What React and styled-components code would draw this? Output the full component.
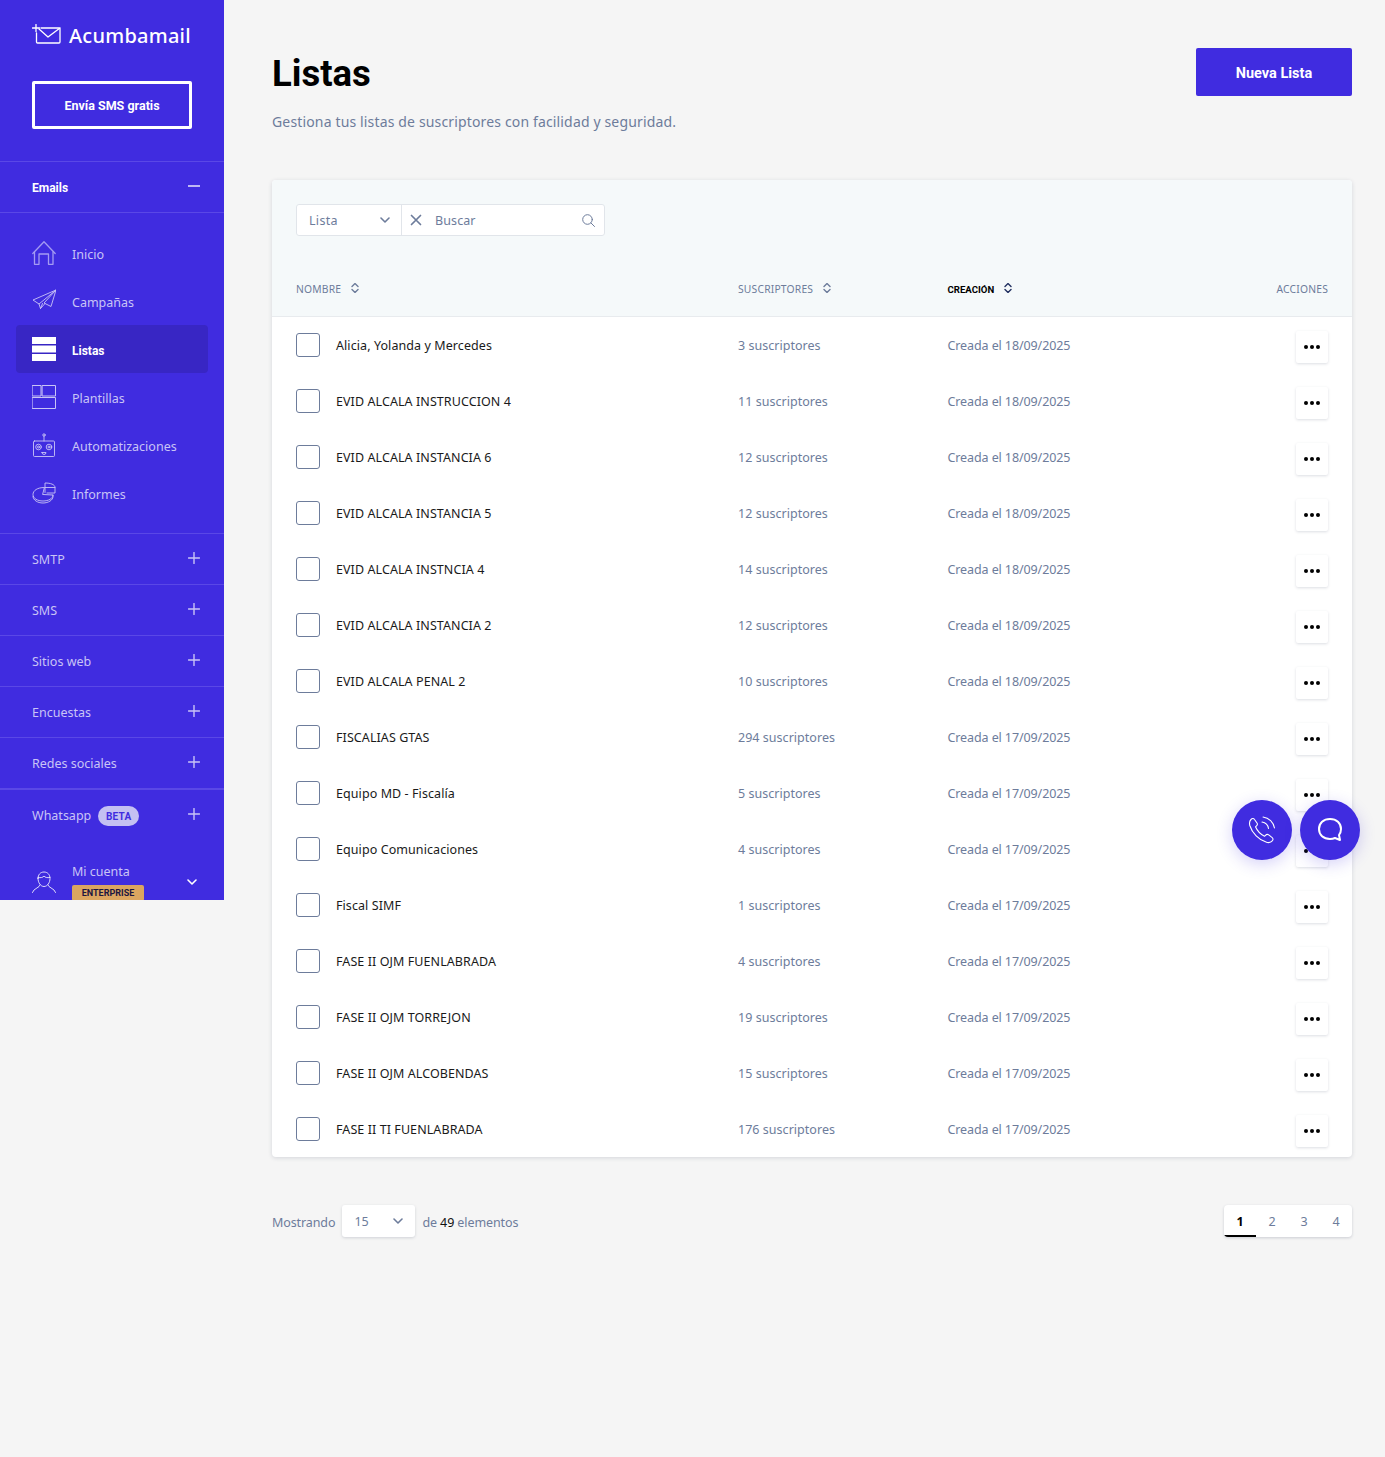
import React from "react";
import styled, { createGlobalStyle } from "styled-components";

const PRIMARY = "#402ce0";
const MUTED = "#6d7c9b";
const LAVENDER = "#c9c4f6";
const FONT = `"Noto Sans", "Liberation Sans", sans-serif`;
const BOLD_FONT = `Roboto, "Liberation Sans", sans-serif`;

const rows = [
	["Alicia, Yolanda y Mercedes", "3", "18/09/2025"],
	["EVID ALCALA INSTRUCCION 4", "11", "18/09/2025"],
	["EVID ALCALA INSTANCIA 6", "12", "18/09/2025"],
	["EVID ALCALA INSTANCIA 5", "12", "18/09/2025"],
	["EVID ALCALA INSTNCIA 4", "14", "18/09/2025"],
	["EVID ALCALA INSTANCIA 2", "12", "18/09/2025"],
	["EVID ALCALA PENAL 2", "10", "18/09/2025"],
	["FISCALIAS GTAS", "294", "17/09/2025"],
	["Equipo MD - Fiscalía", "5", "17/09/2025"],
	["Equipo Comunicaciones", "4", "17/09/2025"],
	["Fiscal SIMF", "1", "17/09/2025"],
	["FASE II OJM FUENLABRADA", "4", "17/09/2025"],
	["FASE II OJM TORREJON", "19", "17/09/2025"],
	["FASE II OJM ALCOBENDAS", "15", "17/09/2025"],
	["FASE II TI FUENLABRADA", "176", "17/09/2025"]
];

const GlobalStyle = createGlobalStyle`
	html, body {
		margin: 0;
		padding: 0;
		background: #f5f5f5;
	}
	body {
		font-family: ${FONT};
		font-size: 13px;
	}
	* {
		box-sizing: border-box;
	}
`;

const Page = styled.div`
	position: relative;
	display: flex;
	align-items: flex-start;
	width: 1385px;
	height: 1457px;
	overflow: hidden;
`;

/* sidebar */
const Sidebar = styled.aside`
	flex: none;
	width: 224px;
	height: 900px;
	overflow: hidden;
	background: ${PRIMARY};
	color: ${LAVENDER};
`;

const Logo = styled.div`
	display: flex;
	align-items: center;
	gap: 8px;
	height: 32px;
	margin: 20px 0 0 32px;
	color: #fff;
	font-size: 20px;
	font-weight: 500;
	letter-spacing: 0.25px;
`;

const LogoText = styled.span`
	margin-top: -2px;
`;

const SmsButton = styled.div`
	display: flex;
	align-items: center;
	justify-content: center;
	width: 160px;
	height: 48px;
	margin: 29px 0 32px 32px;
	border: 3px solid #fff;
	border-radius: 2px;
	color: #fff;
	font-family: ${BOLD_FONT};
	font-size: 12.5px;
	font-weight: 700;
`;

const Section = styled.div`
	display: flex;
	align-items: center;
	justify-content: space-between;
	height: ${(p) => p.$height || 51}px;
	padding: ${(p) => (p.$open ? 2 : 0)}px 24px 0 32px;
	border-top: ${(p) => (p.$thick ? 2 : 1)}px solid #5a48e6;
	font-size: ${(p) => (p.$open ? 12 : 12.5)}px;
	color: ${(p) => (p.$open ? "#fff" : LAVENDER)};
	font-weight: ${(p) => (p.$open ? 700 : 400)};
	font-family: ${(p) => (p.$open ? BOLD_FONT : FONT)};
`;

const SectionLabel = styled.span`
	display: flex;
	align-items: center;
	gap: 7px;
`;

const Beta = styled.span`
	display: inline-flex;
	align-items: center;
	justify-content: center;
	width: 41px;
	height: 20px;
	margin-top: 2px;
	border-radius: 10px;
	background: #c4c0f2;
	color: ${PRIMARY};
	font-family: ${BOLD_FONT};
	font-size: 10px;
	font-weight: 700;
	letter-spacing: 0.3px;
`;

const Nav = styled.nav`
	display: flex;
	flex-direction: column;
	padding: 16px 16px 16px;
	border-top: 1px solid #5a48e6;
`;

const NavItem = styled.div`
	display: flex;
	align-items: center;
	gap: 16px;
	height: 48px;
	padding-left: 16px;
	border-radius: 4px;
	background: ${(p) => (p.$active ? "#3826c4" : "transparent")};
	color: ${(p) => (p.$active ? "#fff" : LAVENDER)};
	font-family: ${(p) => (p.$active ? BOLD_FONT : FONT)};
	font-weight: ${(p) => (p.$active ? 700 : 400)};
	font-size: ${(p) => (p.$active ? 12 : 12.5)}px;
`;

const NavLabel = styled.span`
	padding-top: 3px;
`;

const Account = styled.div`
	display: flex;
	align-items: flex-start;
	gap: 16px;
	padding: 24px 27px 0 32px;
`;

const AccountIcon = styled.div`
	margin-top: 7px;
`;

const AccountText = styled.div`
	flex: 1;
	font-size: 12.5px;
	line-height: 18px;
	margin-top: -1px;
`;

const Plan = styled.div`
	display: flex;
	align-items: center;
	justify-content: center;
	width: 72px;
	height: 16px;
	margin-top: 4px;
	border-radius: 2px;
	background: #dba560;
	color: #1c1640;
	font-family: ${BOLD_FONT};
	font-size: 9px;
	font-weight: 700;
`;

/* main area */
const Main = styled.main`
	flex: 1;
	padding: 48px 33px 0 48px;
`;

const Head = styled.header`
	display: flex;
	align-items: flex-start;
	justify-content: space-between;
	height: 132px;
`;

const Title = styled.h1`
	margin: 1px 0 0;
	color: #000;
	font-family: ${BOLD_FONT};
	font-size: 36.5px;
	line-height: 50px;
	font-weight: 700;
`;

const Subtitle = styled.p`
	margin: 11px 0 0;
	color: ${MUTED};
	font-size: 14px;
	line-height: 24px;
	letter-spacing: 0.15px;
`;

const PrimaryButton = styled.div`
	display: flex;
	align-items: center;
	justify-content: center;
	width: 156px;
	height: 48px;
	padding-top: 2px;
	border-radius: 2px;
	background: ${PRIMARY};
	color: #fff;
	font-family: ${BOLD_FONT};
	font-size: 14.5px;
	font-weight: 700;
`;

const Card = styled.section`
	border-radius: 4px;
	background: #fff;
	box-shadow: 0 1px 4px rgba(40, 50, 80, 0.16);
	overflow: hidden;
`;

const CardTop = styled.div`
	height: 137px;
	padding: 24px 24px 0;
	border-bottom: 1px solid #e8ebee;
	background: #f5f9fa;
`;

const Filter = styled.div`
	display: flex;
	width: 309px;
	height: 32px;
	border: 1px solid #e1e5ea;
	border-radius: 3px;
	background: #fff;
	color: ${MUTED};
	font-size: 12.5px;
	letter-spacing: 0.1px;
`;

const FilterSelect = styled.div`
	display: flex;
	align-items: center;
	justify-content: space-between;
	width: 105px;
	padding: 0 11px 0 12px;
	border-right: 1px solid #e1e5ea;
	letter-spacing: 0.3px;
`;

const FilterSearch = styled.div`
	flex: 1;
	display: flex;
	align-items: center;
	gap: 13px;
	padding: 0 9px 0 8px;
`;

const SearchText = styled.span`
	flex: 1;
`;

const Columns = "442px 209.5px 1fr 90px";

const HeaderRow = styled.div`
	display: grid;
	grid-template-columns: ${Columns};
	align-items: center;
	height: 24px;
	margin-top: 41px;
`;

const HeaderCell = styled.div`
	display: flex;
	align-items: center;
	gap: 10px;
	color: ${(p) => (p.$active ? "#000" : MUTED)};
	font-family: ${(p) => (p.$active ? BOLD_FONT : FONT)};
	font-weight: ${(p) => (p.$active ? 700 : 400)};
	font-size: ${(p) => (p.$active ? 9.6 : 10.3)}px;
	letter-spacing: ${(p) => (p.$active ? 0 : 0.2)}px;
	justify-content: ${(p) => (p.$right ? "flex-end" : "flex-start")};
`;

const Row = styled.div`
	display: grid;
	grid-template-columns: ${Columns};
	align-items: center;
	height: 56px;
	padding: 0 24px;
`;

const NameCell = styled.div`
	display: flex;
	align-items: center;
	gap: 16px;
	color: #1a1a1a;
	font-size: 12.5px;
	letter-spacing: 0.08px;
`;

const Check = styled.span`
	width: 24px;
	height: 24px;
	border: 1px solid #6d7c9b;
	border-radius: 3px;
	background: #fff;
`;

const MutedCell = styled.div`
	color: ${MUTED};
	font-size: 12.5px;
	letter-spacing: ${(p) => p.$spacing}px;
`;

const ActionCell = styled.div`
	display: flex;
	justify-content: flex-end;
`;

const DotsButton = styled.div`
	display: flex;
	align-items: center;
	justify-content: center;
	gap: 2px;
	width: 32px;
	height: 32px;
	margin-top: 4px;
	border-radius: 2px;
	background: #fff;
	box-shadow: 0 1px 3px rgba(40, 50, 80, 0.16);
`;

const Dot = styled.i`
	width: 4px;
	height: 4px;
	border-radius: 50%;
	background: #000;
`;

const Footer = styled.div`
	display: flex;
	align-items: center;
	justify-content: space-between;
	margin-top: 48px;
`;

const Showing = styled.div`
	display: flex;
	align-items: center;
	gap: 7px;
	color: ${MUTED};
	font-size: 12.5px;
	letter-spacing: -0.1px;
`;

const ShowingText = styled.span`
	padding-top: 2px;
`;

const Strong = styled.span`
	color: #111;
`;

const PageSize = styled.div`
	display: flex;
	align-items: center;
	justify-content: space-between;
	width: 73px;
	height: 32px;
	padding: 0 12px;
	border-radius: 3px;
	background: #fff;
	box-shadow: 0 1px 3px rgba(40, 50, 80, 0.18);
`;

const Pager = styled.div`
	display: flex;
	border-radius: 4px;
	background: #fff;
	box-shadow: 0 1px 3px rgba(40, 50, 80, 0.2);
	overflow: hidden;
`;

const PageLink = styled.div`
	display: flex;
	align-items: center;
	justify-content: center;
	width: 32px;
	height: 32px;
	padding-top: 2px;
	border-bottom: 2px solid ${(p) => (p.$active ? "#000" : "transparent")};
	color: ${(p) => (p.$active ? "#000" : MUTED)};
	font-weight: ${(p) => (p.$active ? 700 : 400)};
	font-size: 12.5px;
`;

const FloatButton = styled.div`
	position: absolute;
	top: 800px;
	left: ${(p) => p.$left}px;
	display: flex;
	align-items: center;
	justify-content: center;
	width: 60px;
	height: 60px;
	border-radius: 50%;
	background: ${PRIMARY};
	box-shadow: 0 4px 16px rgba(64, 44, 224, 0.22);
`;

/* icons */
const Line = ({ size = 24, w, h, color = "currentColor", sw = 1, fill = "none", children, raised }) => (
	<svg
		width={w || size}
		height={h || size}
		viewBox={`0 0 ${w || size} ${h || size}`}
		fill={fill}
		stroke={color}
		strokeWidth={sw}
		strokeLinecap="round"
		strokeLinejoin="round"
		style={{ flex: "none", display: "block", marginTop: raised ? -2 : 0 }}
	>
		{children}
	</svg>
);

const LogoIcon = () => (
	<Line w={29} h={24} color="#fff" sw={1.3}>
		<path d="M4.500 9v9a1 1 0 0 0 1 1h21.500a1 1 0 0 0 1-1V5a1 1 0 0 0-1-1H9" />
		<path d="M7 5l9 8 12-9" />
		<path d="M4 .5v7M.5 4h7" />
	</Line>
);

const HomeIcon = () => (
	<Line color="#a49bf2" sw={1.3}>
		<path d="M.8 12.500L12 .8l11.200 11.700" />
		<path d="M2.500 11v12.300h4.500V13h9.500v10.300h4.500V11" />
	</Line>
);

const PlaneIcon = () => (
	<Line color={LAVENDER} sw={0.9}>
		<path d="M24 1L1 11l6 4L24 1z" />
		<path d="M24 1L12 14l7 3.500L24 1z" />
		<path d="M7 15l1.500 4.500L13 14.500" />
		<path d="M8.500 19.500l2-5" />
	</Line>
);

const ListIcon = () => (
	<svg width="24" height="24" viewBox="0 0 24 24" fill="#fff" style={{ flex: "none" }}>
		<rect y="0" width="24" height="7" />
		<rect y="8.500" width="24" height="7" />
		<rect y="17" width="24" height="7" />
	</svg>
);

const TemplateIcon = () => (
	<Line color={LAVENDER} sw={1}>
		<rect x="0.500" y="0.500" width="8.500" height="10.500" />
		<rect x="10.500" y="0.500" width="13" height="10.500" />
		<rect x="0.500" y="12.500" width="23" height="11" />
	</Line>
);

const RobotIcon = () => (
	<Line color={LAVENDER} sw={0.9}>
		<rect x="1.500" y="8" width="21" height="15.500" rx="1" />
		<path d="M12 8V3" />
		<circle cx="12" cy="2" r="1.200" />
		<circle cx="6.500" cy="14" r="2.800" />
		<circle cx="6.500" cy="14" r="1" />
		<circle cx="17" cy="14" r="2.800" />
		<circle cx="17" cy="14" r="1" />
		<path d="M10 19.500h4a2 2 0 0 1-4 0z" />
	</Line>
);

const PieIcon = () => (
	<Line color={LAVENDER} sw={0.9}>
		<path d="M12 6.500C5.500 6.500 1 9.500 1 13.500s4.500 6.500 10 6.500 10-2.500 10-6l-10-.5z" />
		<path d="M1 15.500c0 3.500 4.500 6.500 10 6.500s10-3 10-6.500v-1.500" />
		<path d="M13 11.500V2c5.500 0 10 1.500 10 4.500v5.500H15" />
		<path d="M13 6.500h10" />
	</Line>
);

const UserIcon = () => (
	<Line color="#eceafd" sw={0.9}>
		<path d="M6 7.500C6 3.500 8.500 1 12 1s6 2.500 6 6.500-2.500 8-6 8-6-4-6-8z" />
		<path d="M6 6.500c3 .5 5 0 6-1.500 1 1.500 3 2 6 1.500" />
		<path d="M8 14l-1 1.500-5 3.500-1.500 2.500M16 14l1 1.500 5 3.500 1.500 2.500" />
	</Line>
);

const Plus = () => (
	<Line size={12} color={LAVENDER} sw={1.4} raised>
		<path d="M6 0.500v11M0.500 6h11" />
	</Line>
);

const Minus = () => (
	<Line w={12} h={13} color="#e8e6fb" sw={1.6} raised>
		<path d="M0.500 5h11" />
	</Line>
);

const Chevron = ({ color = MUTED }) => (
	<Line w={10} h={6} color={color} sw={1.6}>
		<path d="M1 1l4 4 4-4" />
	</Line>
);

const Sort = ({ color = MUTED }) => (
	<Line w={8} h={10} color={color} sw={1.4} raised>
		<path d="M1 3.500l3-3 3 3M1 6.500l3 3 3-3" />
	</Line>
);

const Cross = () => (
	<Line size={12} color={MUTED} sw={1.7}>
		<path d="M1.500 1.500l9 9M10.500 1.500l-9 9" />
	</Line>
);

const Search = () => (
	<Line size={13} color={MUTED} sw={1}>
		<circle cx="5.500" cy="5.500" r="4.800" />
		<path d="M9 9l3.500 3.500" />
	</Line>
);

const PhoneIcon = () => (
	<Line size={28} color="#fff" sw={1.1}>
		<path d="M3 3.500C4 2.500 5.500 2 6.500 3.500L9 7c.7 1 .4 2-.5 2.800L7.500 10.800c1.500 3.500 5 7.500 9 9.500l1.200-1.200c.8-.8 2-.9 3-.2l3.500 2.700c1.100.9 1 2.200 0 3.200-1.500 1.500-3.500 2.200-5.700 1.500C11 24 4 17 1.800 9.500 1.200 7 1.500 5 3 3.500z" />
		<path d="M14 6c3.500.5 6 3 6.500 6.500" />
		<path d="M15 1c6 .8 10.500 5.200 11.500 11" />
	</Line>
);

const ChatIcon = () => (
	<Line size={28} color="#fff" sw={2}>
		<path d="M14 3C7.500 3 3 7 3 13s4.500 10 11 10c2 0 3.500-.3 5-1l5 2-1-5c1.300-1.700 2-3.700 2-6 0-6-4.500-10-11-10z" />
	</Line>
);

const menu = [
	{ label: "Inicio", icon: <HomeIcon /> },
	{ label: "Campañas", icon: <PlaneIcon /> },
	{ label: "Listas", icon: <ListIcon />, active: true },
	{ label: "Plantillas", icon: <TemplateIcon /> },
	{ label: "Automatizaciones", icon: <RobotIcon /> },
	{ label: "Informes", icon: <PieIcon /> }
];

const sections = ["SMTP", "SMS", "Sitios web", "Encuestas", "Redes sociales"];

const App = () => (
	<Page>
		<GlobalStyle />
		<Sidebar>
			<Logo>
				<LogoIcon />
				<LogoText>Acumbamail</LogoText>
			</Logo>
			<SmsButton>Envía SMS gratis</SmsButton>
			<Section $open>
				Emails
				<Minus />
			</Section>
			<Nav>
				{menu.map((item) => (
					<NavItem key={item.label} $active={item.active}>
						{item.icon}
						<NavLabel>{item.label}</NavLabel>
					</NavItem>
				))}
			</Nav>
			{sections.map((name) => (
				<Section key={name}>
					{name}
					<Plus />
				</Section>
			))}
			<Section $height={52} $thick>
				<SectionLabel>
					Whatsapp
					<Beta>BETA</Beta>
				</SectionLabel>
				<Plus />
			</Section>
			<Account>
				<AccountIcon>
					<UserIcon />
				</AccountIcon>
				<AccountText>
					Mi cuenta
					<Plan>ENTERPRISE</Plan>
				</AccountText>
				<Line w={10} h={26} color="#fff" sw={1.6}>
					<path d="M1 16l4 4 4-4" />
				</Line>
			</Account>
		</Sidebar>
		<Main>
			<Head>
				<div>
					<Title>Listas</Title>
					<Subtitle>Gestiona tus listas de suscriptores con facilidad y seguridad.</Subtitle>
				</div>
				<PrimaryButton>Nueva Lista</PrimaryButton>
			</Head>
			<Card>
				<CardTop>
					<Filter>
						<FilterSelect>
							Lista
							<Chevron />
						</FilterSelect>
						<FilterSearch>
							<Cross />
							<SearchText>Buscar</SearchText>
							<Search />
						</FilterSearch>
					</Filter>
					<HeaderRow>
						<HeaderCell>
							NOMBRE <Sort />
						</HeaderCell>
						<HeaderCell>
							SUSCRIPTORES <Sort />
						</HeaderCell>
						<HeaderCell $active>
							CREACIÓN <Sort color="#223060" />
						</HeaderCell>
						<HeaderCell $right>ACCIONES</HeaderCell>
					</HeaderRow>
				</CardTop>
				{rows.map(([name, count, date]) => (
					<Row key={name}>
						<NameCell>
							<Check />
							{name}
						</NameCell>
						<MutedCell $spacing={0.03}>{count} suscriptores</MutedCell>
						<MutedCell $spacing={-0.1}>Creada el {date}</MutedCell>
						<ActionCell>
							<DotsButton>
								<Dot />
								<Dot />
								<Dot />
							</DotsButton>
						</ActionCell>
					</Row>
				))}
			</Card>
			<Footer>
				<Showing>
					<ShowingText>Mostrando</ShowingText>
					<PageSize>
						15
						<Chevron />
					</PageSize>
					<ShowingText>
						de <Strong>49</Strong> elementos
					</ShowingText>
				</Showing>
				<Pager>
					<PageLink $active>1</PageLink>
					<PageLink>2</PageLink>
					<PageLink>3</PageLink>
					<PageLink>4</PageLink>
				</Pager>
			</Footer>
		</Main>
		<FloatButton $left={1232}>
			<PhoneIcon />
		</FloatButton>
		<FloatButton $left={1300}>
			<ChatIcon />
		</FloatButton>
	</Page>
);

export default App;
